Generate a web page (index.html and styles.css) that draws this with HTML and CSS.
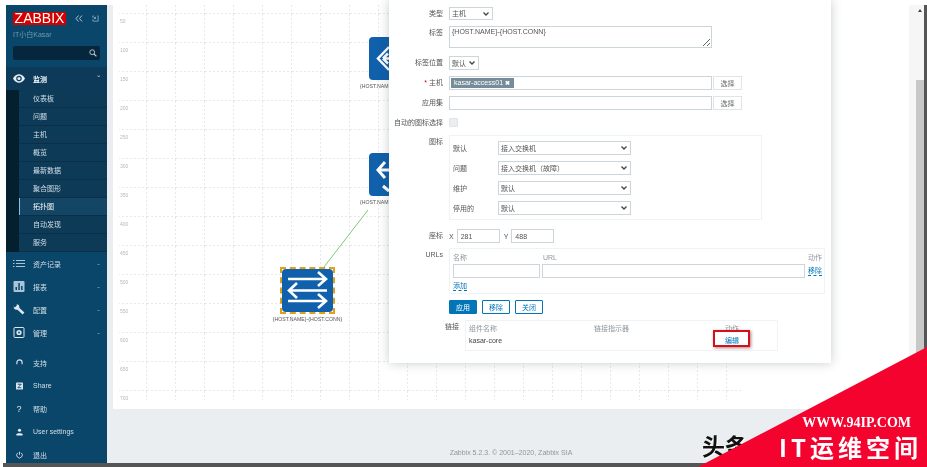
FILE: index.html
```html
<!DOCTYPE html>
<html lang="en">
<head>
  <meta charset="UTF-8">
  <meta name="viewport" content="width=device-width, initial-scale=1.0">
  <title>Zabbix map</title>
  <link rel="stylesheet" href="styles.css">
</head>
<body>
  <div class="shot">
    <nav class="side">
      <div class="logo-row">
        <div class="logo">ZABBIX</div>
        <svg class="collapse" viewBox="0 0 8 7"><path d="M3.500.5L1 3.500l2.500 3M7 .5L4.500 3.500 7 6.500" fill="none" stroke="#a9c4d6"/></svg>
        <svg class="kiosk" viewBox="0 0 8 8"><path d="M1 3V1h1M6 1h1v6H1V5M2 2l2 2M4 2v2H2" fill="none" stroke="#9fc0d6" stroke-width=".8"/></svg>
      </div>
      <div class="user">IT小白Kasar</div>
      <div class="search">
        <svg viewBox="0 0 10 10"><circle cx="4" cy="4" r="3" fill="none" stroke="#b9c6cf" stroke-width="1.2"/><path d="M6.2 6.2L9.3 9.3" stroke="#b9c6cf" stroke-width="1.5"/></svg>
      </div>

      <div class="menu-item open">
        <svg class="ico" viewBox="0 0 14 10"><path d="M0 5C2 1.500 4.500 0 7 0s5 1.500 7 5c-2 3.500-4.500 5-7 5S2 8.500 0 5z" fill="#e4edf3"/><circle cx="7" cy="5" r="3.200" fill="#0c3a58"/><circle cx="7" cy="5" r="1.800" fill="#e4edf3"/></svg>
        <span class="name">监测</span><span class="caret">&#711;</span>
      </div>
      <div class="sub">
        <div class="sub-item">仪表板</div>
        <div class="sub-item">问题</div>
        <div class="sub-item">主机</div>
        <div class="sub-item">概览</div>
        <div class="sub-item">最新数据</div>
        <div class="sub-item">聚合图形</div>
        <div class="sub-item active">拓扑图</div>
        <div class="sub-item">自动发现</div>
        <div class="sub-item">服务</div>
      </div>

      <div class="menu-item">
        <svg class="ico" viewBox="0 0 12 8"><path d="M0 1h1.500M3 1h9M0 4h1.500M3 4h9M0 7h1.500M3 7h9" stroke="#a9c4d6" stroke-width="1"/></svg>
        <span class="name">资产记录</span><span class="caret">-</span>
      </div>
      <div class="menu-item">
        <svg class="ico" viewBox="0 0 11 11"><rect width="11" height="11" rx="1" fill="#a9c4d6"/><path d="M2 9V6h1.500v3zM4.800 9V2h1.500v7zM7.600 9V5h1.500v4z" fill="#0a466a"/></svg>
        <span class="name">报表</span><span class="caret">-</span>
      </div>
      <div class="menu-item">
        <svg class="ico" viewBox="0 0 11 11"><circle cx="3" cy="3" r="2.800" fill="#dbe6ee"/><path d="M3.500 3.500L10 9.500" stroke="#dbe6ee" stroke-width="2.600"/><path d="M0 0h3.200v1.600L1.600 3.200H0z" fill="#0a466a"/></svg>
        <span class="name">配置</span><span class="caret">-</span>
      </div>
      <div class="menu-item">
        <svg class="ico" viewBox="0 0 11 11"><rect x=".5" y=".5" width="10" height="10" rx="1" fill="none" stroke="#dbe6ee"/><circle cx="5.500" cy="5.500" r="2.600" fill="#dbe6ee"/><circle cx="5.500" cy="5.500" r=".9" fill="#0a466a"/></svg>
        <span class="name">管理</span><span class="caret">-</span>
      </div>

      <div class="bottom-menu">
        <div class="menu-item">
          <svg class="ico small" viewBox="0 0 8 9"><path d="M1 6V4a3 3 0 016 0v2" fill="none" stroke="#dbe6ee" stroke-width="1.300"/></svg>
          <span class="name">支持</span>
        </div>
        <div class="menu-item">
          <svg class="ico small" viewBox="0 0 8 8"><rect width="8" height="8" rx="1" fill="#dbe6ee"/><path d="M2 2h4L2 6h4" fill="none" stroke="#0a466a"/></svg>
          <span class="name">Share</span>
        </div>
        <div class="menu-item">
          <span class="ico small q">?</span>
          <span class="name">帮助</span>
        </div>
        <div class="menu-item">
          <svg class="ico small" viewBox="0 0 8 8"><circle cx="4" cy="2" r="1.800" fill="#e4edf3"/><path d="M.5 8V6.500C1.500 5 6.500 5 7.500 6.500V8z" fill="#e4edf3"/></svg>
          <span class="name">User settings</span>
        </div>
        <div class="menu-item">
          <svg class="ico small" viewBox="0 0 8 8"><path d="M2.200 1.500a3.200 3.200 0 103.600 0M4 .3v3.500" fill="none" stroke="#dbe6ee"/></svg>
          <span class="name">退出</span>
        </div>
      </div>
    </nav>

    <main class="main">
      <div class="map">
        <svg class="grid" width="624" height="395">
          <defs>
            <pattern id="cell" width="29" height="29" patternUnits="userSpaceOnUse" x="-1" y="9">
              <path d="M29 0V29M0 29H29" stroke="#d0d3d5" stroke-dasharray="2 2" fill="none"/>
            </pattern>
          </defs>
          <rect width="624" height="395" fill="url(#cell)"/>
        </svg>
        <div class="ticks">
          <span>50</span><span>100</span><span>150</span><span>200</span><span>250</span><span>300</span><span>350</span>
          <span>400</span><span>450</span><span>500</span><span>550</span><span>600</span><span>650</span><span>700</span>
        </div>

        <svg class="link-line" width="60" height="70"><path d="M1 66L45 9" stroke="#7ccb7c" fill="none"/></svg>

        <div class="node node-a">
          <svg viewBox="0 0 51 43"><rect width="51" height="43" rx="4" fill="#1060ab"/><path d="M20 10L9 21.500 20 33M27 21.500H14M14 21.500l5-5M14 21.500l5 5" fill="none" stroke="#fff" stroke-width="2.500"/></svg>
          <span class="cut">{HOST.NAM</span>
        </div>
        <div class="node node-b">
          <svg viewBox="0 0 51 43"><rect width="51" height="43" rx="4" fill="#1060ab"/><path d="M30 17H9M16 9l-7 8 7 8M14 33l6 5" fill="none" stroke="#fff" stroke-width="3"/></svg>
          <span class="cut">{HOST.NAM</span>
        </div>
        <div class="node node-c">
          <svg viewBox="0 0 51 43"><rect width="51" height="43" rx="4" fill="#1060ab"/><path d="M6 10H44M36 3l8 7-8 7M45 21.500H7M15 14l-8 7.500 8 7.500M6 32H44M36 25l8 7-8 7" fill="none" stroke="#fff" stroke-width="2.600"/></svg>
          <span>{HOST.NAME}-{HOST.CONN}</span>
        </div>
      </div>
      <footer class="footer">Zabbix 5.2.3. &copy; 2001–2020, Zabbix SIA</footer>
    </main>

    <div class="scrollbar">
      <span class="arrow"></span>
      <div class="thumb"></div>
    </div>
  </div>
  <div class="bottom-edge"></div>

  <div class="dialog">
    <div class="row row-type">
      <label>类型</label>
      <select class="w-44"><option>主机</option></select>
    </div>
    <div class="row row-text">
      <label>标签</label>
      <textarea class="text-box">{HOST.NAME}-{HOST.CONN}</textarea>
    </div>
    <div class="row">
      <label>标签位置</label>
      <select class="w-30"><option>默认</option></select>
    </div>
    <div class="row">
      <label><b class="req">*</b> 主机</label>
      <div class="with-btn">
        <div class="multi"><span class="tag">kasar-access01 <b>&#10006;</b></span></div>
        <button class="btn-pick">选择</button>
      </div>
    </div>
    <div class="row">
      <label>应用集</label>
      <div class="with-btn">
        <div class="multi"></div>
        <button class="btn-pick">选择</button>
      </div>
    </div>
    <div class="row row-check">
      <label>自动的图标选择</label>
      <span class="check"></span>
    </div>
    <div class="row row-icons">
      <label>图标</label>
      <div class="icon-box">
        <span>默认</span><select><option>接入交换机</option></select>
        <span>问题</span><select><option>接入交换机（故障）</option></select>
        <span>维护</span><select><option>默认</option></select>
        <span>停用的</span><select><option>默认</option></select>
      </div>
    </div>
    <div class="row row-coords">
      <label>座标</label>
      <div class="coords">
        <span>X</span><input class="coord" value="281">
        <span class="y">Y</span><input class="coord" value="488">
      </div>
    </div>
    <div class="row">
      <label>URLs</label>
      <div class="url-box">
        <span class="head">名称</span><span class="head url-head">URL</span><span class="head">动作</span>
        <input><input><a class="lnk">移除</a>
        <a class="lnk add">添加</a>
      </div>
    </div>
    <div class="row">
      <label></label>
      <div class="actions">
        <button class="btn primary">应用</button>
        <button class="btn">移除</button>
        <button class="btn">关闭</button>
      </div>
    </div>
    <div class="row row-links">
      <label>链接</label>
      <div class="link-box">
        <span class="head">组件名称</span><span class="head">链接指示器</span><span class="head">动作</span>
        <span class="value">kasar-core</span><span></span>
        <span class="edit-cell"><a class="edit">编辑</a><i class="mark"></i></span>
      </div>
    </div>
  </div>

  <div class="toutiao">头条</div>
  <div class="ribbon"></div>
  <div class="brand">
    <div class="brand-url">WWW.94IP.COM</div>
    <div class="brand-name">IT运维空间</div>
  </div>
</body>
</html>
```

FILE: styles.css
```css
html, body {
  margin: 0;
  height: 467px;
  overflow: hidden;
  background: #fff;
}

body {
  font-family: 'Liberation Sans', 'Noto Sans CJK SC', sans-serif;
  font-size: 7px;
  color: #555;
  filter: blur(0.45px);
}

.shot {
  display: flex;
  height: 458px;
  margin: 5px 0 0 6px;
  border-right: 3px solid #555;
}

.bottom-edge {
  height: 4px;
  margin-left: 3px;
  background: #555;
}

/* sidebar */
.side {
  width: 101px;
  flex: none;
  overflow: hidden;
  background: #0a466a;
  color: #d3dfe7;
}

.logo-row {
  display: flex;
  align-items: center;
  padding: 7px 0 0 7px;
}

.logo {
  width: 53px;
  height: 13px;
  background: #d40000;
  color: #fff;
  font-size: 14px;
  line-height: 13px;
  text-align: center;
}

.collapse {
  width: 8px;
  height: 7px;
  margin-left: 9px;
}

.kiosk {
  width: 7px;
  height: 7px;
  margin-left: 9px;
}

.user {
  padding: 5px 0 0 7px;
  height: 11px;
  line-height: 10px;
  color: #6f97b2;
}

.search {
  display: flex;
  align-items: center;
  justify-content: flex-end;
  height: 14px;
  margin: 5px 7px 7px;
  padding-right: 3px;
  box-sizing: border-box;
  border-radius: 2px;
  background: #05263c;
}

.search svg {
  width: 8px;
  height: 8px;
}

.menu-item {
  display: flex;
  align-items: center;
  height: 23px;
  padding: 0 7px;
  box-sizing: border-box;
}

.menu-item .name {
  margin-left: 8px;
  flex: 1;
}

.menu-item.open {
  background: #0c3a58;
  color: #eef4f8;
  font-weight: bold;
}

.ico {
  width: 12px;
  height: 11px;
  flex: none;
}

.ico.small {
  width: 7px;
  height: 8px;
  margin: 0 2.500px;
}

.ico.q {
  height: auto;
  font-size: 9px;
  color: #dbe6ee;
  text-align: center;
}

.caret {
  color: #9ab7ca;
  font-size: 8px;
}

.sub {
  padding-left: 13px;
  background: #04202f;
}

.sub-item {
  height: 18px;
  padding-left: 14px;
  box-sizing: border-box;
  border-bottom: 1px solid #0a2f47;
  background: #0d3a57;
  line-height: 17px;
}

.sub-item.active {
  background: #134564;
  box-shadow: inset 1px 0 0 #8fc0e0;
  color: #fff;
}

.bottom-menu {
  margin-top: 7px;
}

/* map */
.main {
  flex: 1;
  display: flex;
  flex-direction: column;
  padding-left: 6px;
  background: #ebeef0;
}

.map {
  position: relative;
  height: 404px;
  flex: none;
  background: #fff;
}

.grid {
  position: absolute;
  left: 6px;
  top: 0;
}

.ticks {
  position: absolute;
  left: 7px;
  top: 1px;
  display: grid;
  grid-auto-rows: 29px;
  align-items: center;
  font-size: 5px;
  color: #b5b8ba;
}

.link-line {
  position: absolute;
  left: 210px;
  top: 196px;
}

.node {
  position: absolute;
  display: flex;
  flex-direction: column;
  align-items: center;
  width: 51px;
  color: #555;
  font-size: 5.200px;
  white-space: nowrap;
}

.node svg {
  width: 51px;
  height: 43px;
  flex: none;
  margin-bottom: 3px;
}

.node .cut {
  align-self: flex-start;
  margin-left: -9px;
}

.node-a {
  left: 256px;
  top: 32px;
}

.node-b {
  left: 256px;
  top: 148px;
}

.node-c {
  left: 169px;
  top: 264px;
}

.node-c svg {
  outline: 2px dashed #e0a01e;
  outline-offset: 0;
  margin-bottom: 4px;
}

.footer {
  flex: 1;
  display: flex;
  align-items: flex-end;
  justify-content: center;
  padding-bottom: 7px;
  color: #8e979d;
}

.scrollbar {
  width: 15px;
  flex: none;
  position: relative;
  background: #f6f6f6;
}

.arrow {
  position: absolute;
  right: 2px;
  top: 4px;
  border: 2px solid transparent;
  border-top: 0;
  border-bottom: 3px solid #444;
}

.thumb {
  position: absolute;
  right: 0;
  top: 75px;
  width: 8px;
  height: 300px;
  background: #c8c8c8;
}

/* dialog */
.dialog {
  position: absolute;
  left: 389px;
  top: 0;
  width: 442px;
  height: 363px;
  padding-top: 7px;
  box-sizing: border-box;
  background: #fff;
  box-shadow: 0 0 10px rgba(30, 50, 60, 0.25);
}

.row {
  display: grid;
  grid-template-columns: 54px 1fr;
  column-gap: 6px;
  margin-bottom: 6px;
}

.row label {
  text-align: right;
  line-height: 13px;
  white-space: nowrap;
}

.req {
  color: #d40000;
  font-weight: normal;
}

select, input, textarea, .multi {
  box-sizing: border-box;
  margin: 0;
  border: 1px solid #ccd5d9;
  border-radius: 0;
  background: #fff;
  color: #555;
  font-family: inherit;
  font-size: 7px;
}

select {
  height: 14px;
  padding: 0 0 0 2px;
  appearance: none;
  background: #fff url("data:image/svg+xml,%3Csvg xmlns='http://www.w3.org/2000/svg' viewBox='0 0 6 4'%3E%3Cpath d='M.5.5L3 3 5.500.5' fill='none' stroke='%23444' stroke-width='1.300'/%3E%3C/svg%3E") no-repeat right 3px center / 6px 4px;
}

input {
  height: 14px;
  padding: 0 3px;
}

.w-44 {
  width: 44px;
  height: 13px;
}

.w-30 {
  width: 30px;
}

.text-box {
  display: block;
  width: 263px;
  height: 22px;
  padding: 1px 2px;
  margin-bottom: 2px;
}

.with-btn {
  display: flex;
  gap: 1px;
}

.multi {
  width: 263px;
  height: 14px;
  padding: 1px;
}

.tag {
  display: block;
  width: 63px;
  height: 10px;
  padding-left: 3px;
  box-sizing: border-box;
  background: #768d99;
  color: #fff;
  line-height: 10px;
  white-space: nowrap;
}

.tag b {
  font-size: 6px;
}

.btn-pick {
  width: 29px;
  height: 14px;
  padding: 0;
  border: 1px solid #dfe4e7;
  background: #fff;
  color: #666;
  font-family: inherit;
  font-size: 7px;
}

.row-check {
  height: 13px;
}

.check {
  width: 9px;
  height: 9px;
  margin-top: 2px;
  border-radius: 1px;
  background: #ebeef0;
  border: 1px solid #e0e4e6;
  box-sizing: border-box;
}

.row-icons {
  margin-bottom: 9px;
}

.icon-box {
  display: grid;
  grid-template-columns: 45px 133px;
  grid-auto-rows: 14px;
  row-gap: 6px;
  align-items: center;
  width: 313px;
  height: 85px;
  padding: 5px 0 0 3px;
  box-sizing: border-box;
  border: 1px solid #f0f2f3;
}

.icon-box select {
  width: 133px;
}

.row-coords {
  margin-bottom: 5px;
  height: 14px;
}

.coords {
  display: flex;
  align-items: center;
}

.coord {
  width: 43px;
  margin-left: 3px;
}

.y {
  margin-left: 4px;
}

.url-box {
  display: grid;
  grid-template-columns: 87px 263px auto;
  grid-template-rows: 14px 14px 16px;
  column-gap: 2px;
  align-items: center;
  width: 376px;
  height: 46px;
  padding: 1px 0 0 3px;
  box-sizing: border-box;
  border: 1px solid #f0f2f3;
}

.url-box input {
  width: 100%;
}

.url-head {
  padding-left: 1px;
}

.head {
  color: #8e979d;
  white-space: nowrap;
}

.url-box .head:nth-child(3) {
  margin-left: 1px;
}

.lnk {
  margin-left: 1px;
  color: #0275b8;
  border-bottom: 1px dashed #0275b8;
  justify-self: start;
  line-height: 9px;
}

.add {
  margin-left: 0;
  grid-column: 1;
}

.actions {
  display: flex;
  gap: 5px;
}

.btn {
  width: 28px;
  height: 14px;
  padding: 0;
  border: 1px solid #0275b8;
  border-radius: 1px;
  background: #fff;
  color: #0275b8;
  font-family: inherit;
  font-size: 7px;
}

.btn.primary {
  background: #0275b8;
  color: #fff;
}

.row-links {
  grid-template-columns: 70px 1fr;
}

.link-box {
  display: grid;
  grid-template-columns: 125px 131px auto;
  grid-template-rows: 13px 12px;
  align-items: center;
  width: 313px;
  height: 31px;
  padding: 0 0 0 3px;
  box-sizing: border-box;
  border: 1px solid #f0f2f3;
}

.value {
  color: #444;
}

.edit-cell {
  position: relative;
}

.edit {
  color: #0275b8;
}

.mark {
  position: absolute;
  left: -12px;
  top: -5px;
  width: 37px;
  height: 17px;
  box-sizing: border-box;
  border: 2px solid #d5101a;
  box-shadow: 1px 1px 3px rgba(90, 0, 0, 0.5);
}

/* watermark */
.toutiao {
  position: absolute;
  left: 702px;
  top: 433px;
  font-size: 23px;
  line-height: 28px;
  font-weight: bold;
  color: #111;
  text-shadow: 1px 1px 0 #fff;
}

.ribbon {
  position: absolute;
  right: 0;
  bottom: 0;
  width: 229px;
  height: 120px;
  background: #f5032f;
  clip-path: polygon(100% 0, 100% 100%, 0 100%);
}

.brand {
  position: absolute;
  right: 9px;
  bottom: 5px;
  display: flex;
  flex-direction: column;
  align-items: flex-end;
  color: #fff;
}

.brand-url {
  margin-right: 7px;
  font-family: 'Liberation Serif', serif;
  font-size: 14px;
  line-height: 16px;
  font-weight: bold;
}

.brand-name {
  font-family: 'Noto Sans CJK SC', sans-serif;
  font-size: 24px;
  line-height: 31px;
  font-weight: bold;
  letter-spacing: 4px;
  margin-right: -4px;
}
```
